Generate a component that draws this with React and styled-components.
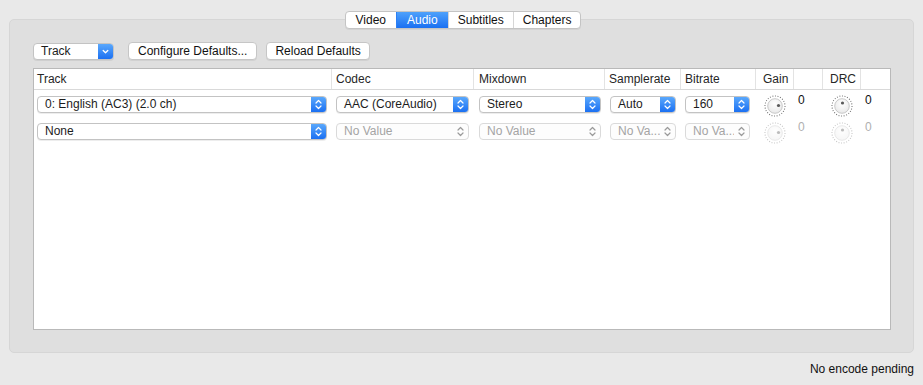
import React from "react";
import styled, { createGlobalStyle, css } from "styled-components";

const GlobalStyle = createGlobalStyle`
  html, body {
    margin: 0;
    padding: 0;
    background: #ececec;
  }
  body {
    font-family: "Liberation Sans", Arial, sans-serif;
    font-size: 12px;
    color: #222;
  }
  * {
    box-sizing: border-box;
  }
`;

const Window = styled.div`
  height: 385px;
  display: flex;
  flex-direction: column;
  padding: 11px 9px 0;
  background: #e9e9e9;
`;

const TabBar = styled.div`
  align-self: center;
  position: relative;
  z-index: 1;
  display: flex;
  height: 18px;
  margin-bottom: -10px;
  margin-left: 3px;
  background: #fff;
  border: 1px solid #c4c4c4;
  border-radius: 4px;
  box-shadow: 0 1px 0 rgba(0, 0, 0, 0.05);
  overflow: hidden;
`;

const Tab = styled.div`
  display: flex;
  align-items: center;
  justify-content: center;
  padding: 0 ${(p) => p.$pad}px;
  line-height: 16px;
  color: #111;
  border-left: 1px solid #d6d6d6;

  &:first-child {
    border-left: none;
  }

  ${(p) =>
    p.$active &&
    css`
      color: #fff;
      border-left-color: #2c7ff4;
      background: linear-gradient(#4ea1fb, #1a70f2);
    `}
`;

const Panel = styled.div`
  height: 334px;
  display: flex;
  flex-direction: column;
  gap: 8px;
  padding: 22px 22px 22px 23px;
  background: #dfdfdf;
  border: 1px solid #d6d6d6;
  border-radius: 5px;
`;

const Toolbar = styled.div`
  display: flex;
  align-items: center;
  height: 18px;
  gap: 14px;

  & > button + button {
    margin-left: -5px;
  }
`;

const Button = styled.button`
  height: 18px;
  padding: 0 ${(p) => p.$pad || 11}px;
  font: inherit;
  color: #111;
  background: #fff;
  border: 1px solid #c6c6c6;
  border-radius: 4px;
  box-shadow: 0 1px 0 rgba(0, 0, 0, 0.06);
`;

const PopUp = styled.div`
  display: flex;
  align-items: stretch;
  height: 17px;
  width: ${(p) => (p.$width ? `${p.$width}px` : "100%")};
  background: ${(p) => (p.$disabled ? "#fdfdfd" : "#fff")};
  border: 1px solid ${(p) => (p.$disabled ? "#dadada" : "#c3c3c3")};
  border-radius: 4px;
  box-shadow: ${(p) => (p.$disabled ? "none" : "0 1px 0 rgba(0,0,0,0.07)")};
  overflow: hidden;
`;

const PopUpLabel = styled.span`
  flex: 1;
  min-width: 0;
  padding-left: 7px;
  line-height: 15px;
  white-space: nowrap;
  overflow: hidden;
  color: ${(p) => (p.$disabled ? "#a4a4a4" : "#1c1c1c")};
`;

const Stepper = styled.span`
  flex: none;
  width: 15px;
  display: flex;
  align-items: center;
  justify-content: center;
  ${(p) =>
    p.$disabled
      ? css`
          color: #9a9a9a;
        `
      : css`
          color: #fff;
          background: linear-gradient(#5aa8fc, #1b70f2);
        `}
`;

const Table = styled.div`
  flex: 1;
  display: flex;
  flex-direction: column;
  background: #fff;
  border: 1px solid #b9b9b9;
`;

const COLUMNS = "298px 142px 131px 76px 75px 38px 29px 38px 1fr";

const HeaderRow = styled.div`
  display: grid;
  grid-template-columns: ${COLUMNS};
  height: 21px;
  border-bottom: 1px solid #d9d9d9;
`;

const HeaderCell = styled.div`
  display: flex;
  align-items: center;
  padding-left: ${(p) => p.$indent ?? 3}px;
  color: #262626;
  border-right: ${(p) => (p.$last ? "none" : "1px solid #e3e3e3")};
`;

const Rows = styled.div`
  display: flex;
  flex-direction: column;
  padding-top: 1px;
`;

const Row = styled.div`
  display: grid;
  grid-template-columns: ${COLUMNS};
  height: 27px;
  align-items: start;
  padding-top: 5px;
`;

const Cell = styled.div`
  display: flex;
  padding: 0 ${(p) => p.$right ?? 5}px 0 ${(p) => p.$left ?? 4}px;
`;

const KnobCell = styled.div`
  display: flex;
  justify-content: center;
  margin-top: -1px;
  opacity: ${(p) => (p.$disabled ? 0.4 : 1)};
`;

const Value = styled.span`
  padding-left: 4px;
  margin-top: -3px;
  font-size: 12px;
  color: ${(p) => (p.$disabled ? "#b0b0b0" : "#111")};
`;

const StatusBar = styled.div`
  flex: 1;
  display: flex;
  align-items: center;
  justify-content: flex-end;
  font-size: 12px;
  color: #111;
`;

const UpDown = () => (
  <svg width="9" height="13" viewBox="0 0 9 13">
    <path
      d="M2 5 L4.5 2.5 L7 5 M2 8 L4.5 10.5 L7 8"
      fill="none"
      stroke="currentColor"
      strokeWidth="1.2"
      strokeLinecap="round"
      strokeLinejoin="round"
    />
  </svg>
);

const Down = () => (
  <svg width="9" height="13" viewBox="0 0 9 13">
    <path
      d="M2.2 5.5 L4.5 7.8 L6.8 5.5"
      fill="none"
      stroke="currentColor"
      strokeWidth="1.3"
      strokeLinecap="round"
      strokeLinejoin="round"
    />
  </svg>
);

const Knob = ({ dot }) => (
  <svg width="22" height="22" viewBox="0 0 22 22">
    <defs>
      <radialGradient id="knobFill" cx="50%" cy="35%" r="65%">
        <stop offset="0%" stopColor="#ffffff" />
        <stop offset="100%" stopColor="#e9e9e9" />
      </radialGradient>
    </defs>
    <circle
      cx="11"
      cy="11"
      r="10"
      fill="none"
      stroke="#6a6a6a"
      strokeWidth="1.1"
      strokeDasharray="0.9 1.7"
    />
    <circle cx="11" cy="11" r="7.3" fill="url(#knobFill)" stroke="#bdbdbd" strokeWidth="0.8" />
    <circle cx={dot[0]} cy={dot[1]} r="1.6" fill="#5a5a5a" />
  </svg>
);

const Select = ({ label, disabled, width, pulldown }) => (
  <PopUp $disabled={disabled} $width={width}>
    <PopUpLabel $disabled={disabled}>{label}</PopUpLabel>
    <Stepper $disabled={disabled}>{pulldown ? <Down /> : <UpDown />}</Stepper>
  </PopUp>
);

const headers = [
  { label: "Track", indent: 3 },
  { label: "Codec", indent: 4 },
  { label: "Mixdown", indent: 5 },
  { label: "Samplerate", indent: 4 },
  { label: "Bitrate", indent: 4 },
  { label: "Gain", indent: 7 },
  { label: "", indent: 0 },
  { label: "DRC", indent: 7 },
  { label: "", indent: 0, last: true },
];

const tracks = [
  {
    id: 0,
    track: "0: English (AC3) (2.0 ch)",
    codec: "AAC (CoreAudio)",
    mixdown: "Stereo",
    samplerate: "Auto",
    bitrate: "160",
    disabled: false,
  },
  {
    id: 1,
    track: "None",
    codec: "No Value",
    mixdown: "No Value",
    samplerate: "No Va...",
    bitrate: "No Va...",
    disabled: true,
  },
];

const tabs = [
  { name: "Video", pad: 10 },
  { name: "Audio", pad: 10 },
  { name: "Subtitles", pad: 9 },
  { name: "Chapters", pad: 9 },
];

const App = () => (
  <>
    <GlobalStyle />
    <Window>
      <TabBar>
        {tabs.map((t) => (
          <Tab key={t.name} $pad={t.pad} $active={t.name === "Audio"}>
            {t.name}
          </Tab>
        ))}
      </TabBar>
      <Panel>
        <Toolbar>
          <Select label="Track" width={81} pulldown />
          <Button $pad={9}>Configure Defaults...</Button>
          <Button $pad={8}>Reload Defaults</Button>
        </Toolbar>
        <Table>
          <HeaderRow>
            {headers.map((h, i) => (
              <HeaderCell key={i} $indent={h.indent} $last={h.last}>
                {h.label}
              </HeaderCell>
            ))}
          </HeaderRow>
          <Rows>
            {tracks.map((t) => (
              <Row key={t.id}>
                <Cell $left={3} $right={5}>
                  <Select label={t.track} />
                </Cell>
                <Cell $left={4} $right={5}>
                  <Select label={t.codec} disabled={t.disabled} />
                </Cell>
                <Cell $left={5} $right={4}>
                  <Select label={t.mixdown} disabled={t.disabled} />
                </Cell>
                <Cell $left={5} $right={5}>
                  <Select label={t.samplerate} disabled={t.disabled} />
                </Cell>
                <Cell $left={4} $right={6}>
                  <Select label={t.bitrate} disabled={t.disabled} />
                </Cell>
                <KnobCell $disabled={t.disabled}>
                  <Knob dot={[14.5, 10.5]} />
                </KnobCell>
                <Value $disabled={t.disabled}>0</Value>
                <KnobCell $disabled={t.disabled}>
                  <Knob dot={[11.5, 8]} />
                </KnobCell>
                <Value $disabled={t.disabled}>0</Value>
              </Row>
            ))}
          </Rows>
        </Table>
      </Panel>
      <StatusBar>No encode pending</StatusBar>
    </Window>
  </>
);

export default App;
